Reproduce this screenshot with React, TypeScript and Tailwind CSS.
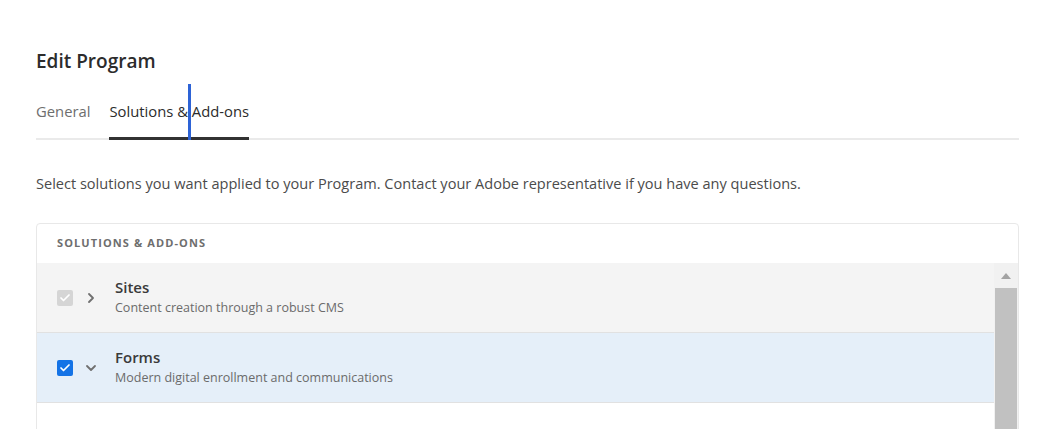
import { Check, ChevronRight, ChevronDown } from 'lucide-react'

const rows = [
  { name: 'Sites', desc: 'Content creation through a robust CMS', checked: true, disabled: true, open: false },
  { name: 'Forms', desc: 'Modern digital enrollment and communications', checked: true, disabled: false, open: true },
]

export default function App() {
  return (
    <div className="h-[429px] w-[1054px] overflow-hidden bg-white text-[#2c2c2c]" style={{ fontFamily: '"Open Sans", "Noto Sans", sans-serif' }}>
      <div className="pl-[36px] pr-[35px] pt-[47px]">
        <h1 className="text-[19px] font-semibold leading-[28px] text-[#2c2c2c]">Edit Program</h1>

        {/* tabs */}
        <div className="relative mt-[9px] flex h-[56px] items-center gap-[19px] border-b-2 border-[#eaeaea] text-[14.8px]">
          <span className="text-[#6e6e6e]">General</span>
          <span className="relative flex h-full items-center text-[#2c2c2c]">
            Solutions &amp; Add-ons
            <span className="absolute -bottom-[2px] left-0 right-0 h-[3px] bg-[#323232]" />
          </span>
          <span className="absolute left-[152px] top-0 h-[56px] w-[3px] bg-[#2d63d6]" />
        </div>

        <p className="mt-[32px] text-[14.55px] leading-[22px] text-[#4b4b4b]">
          Select solutions you want applied to your Program. Contact your Adobe representative if you have any questions.
        </p>

        {/* table */}
        <div className="mt-[29px] rounded-t-[4px] border border-[#e8e8e8]">
          <div className="flex h-[39px] items-center pl-[20px] text-[11px] font-bold uppercase tracking-[0.1em] text-[#6e6e6e]">
            Solutions &amp; Add-ons
          </div>
          <div className="flex">
            <div className="flex-1">
              {rows.map((r) => (
                <div
                  key={r.name}
                  className={`flex h-[70px] items-center border-b border-[#e1e1e1] ${r.open ? 'bg-[#e5eff9]' : 'bg-[#f4f4f4]'}`}
                >
                  <div className="flex w-[78px] items-center pl-[20px]">
                    <span
                      className={`flex h-[16px] w-[16px] items-center justify-center rounded-[2px] ${r.disabled ? 'bg-[#d5d5d5]' : 'bg-[#1473e6]'}`}
                    >
                      <Check size={12} strokeWidth={3.5} className="text-white" />
                    </span>
                    {r.open ? (
                      <ChevronDown size={16} strokeWidth={2.75} className="ml-[10px] text-[#707070]" />
                    ) : (
                      <ChevronRight size={16} strokeWidth={2.75} className="ml-[10px] text-[#707070]" />
                    )}
                  </div>
                  <div className="-mt-[1px]">
                    <div className="text-[15px] font-semibold leading-[20px] text-[#3a3a3a]">{r.name}</div>
                    <div className="mt-[2px] text-[12.5px] leading-[18px] text-[#6b6b6b]">{r.desc}</div>
                  </div>
                </div>
              ))}
              <div className="h-[40px]" />
            </div>
            {/* scrollbar */}
            <div className="flex w-[24px] flex-col items-center bg-[#f1f1f1]">
              <div className="flex h-[25px] items-center justify-center">
                <svg width="12" height="8" viewBox="0 0 12 8"><path d="M6 1 L11 7 L1 7 Z" fill="#a3a3a3" /></svg>
              </div>
              <div className="w-[22px] flex-1 bg-[#c1c1c1]" />
            </div>
          </div>
        </div>
      </div>
    </div>
  )
}
